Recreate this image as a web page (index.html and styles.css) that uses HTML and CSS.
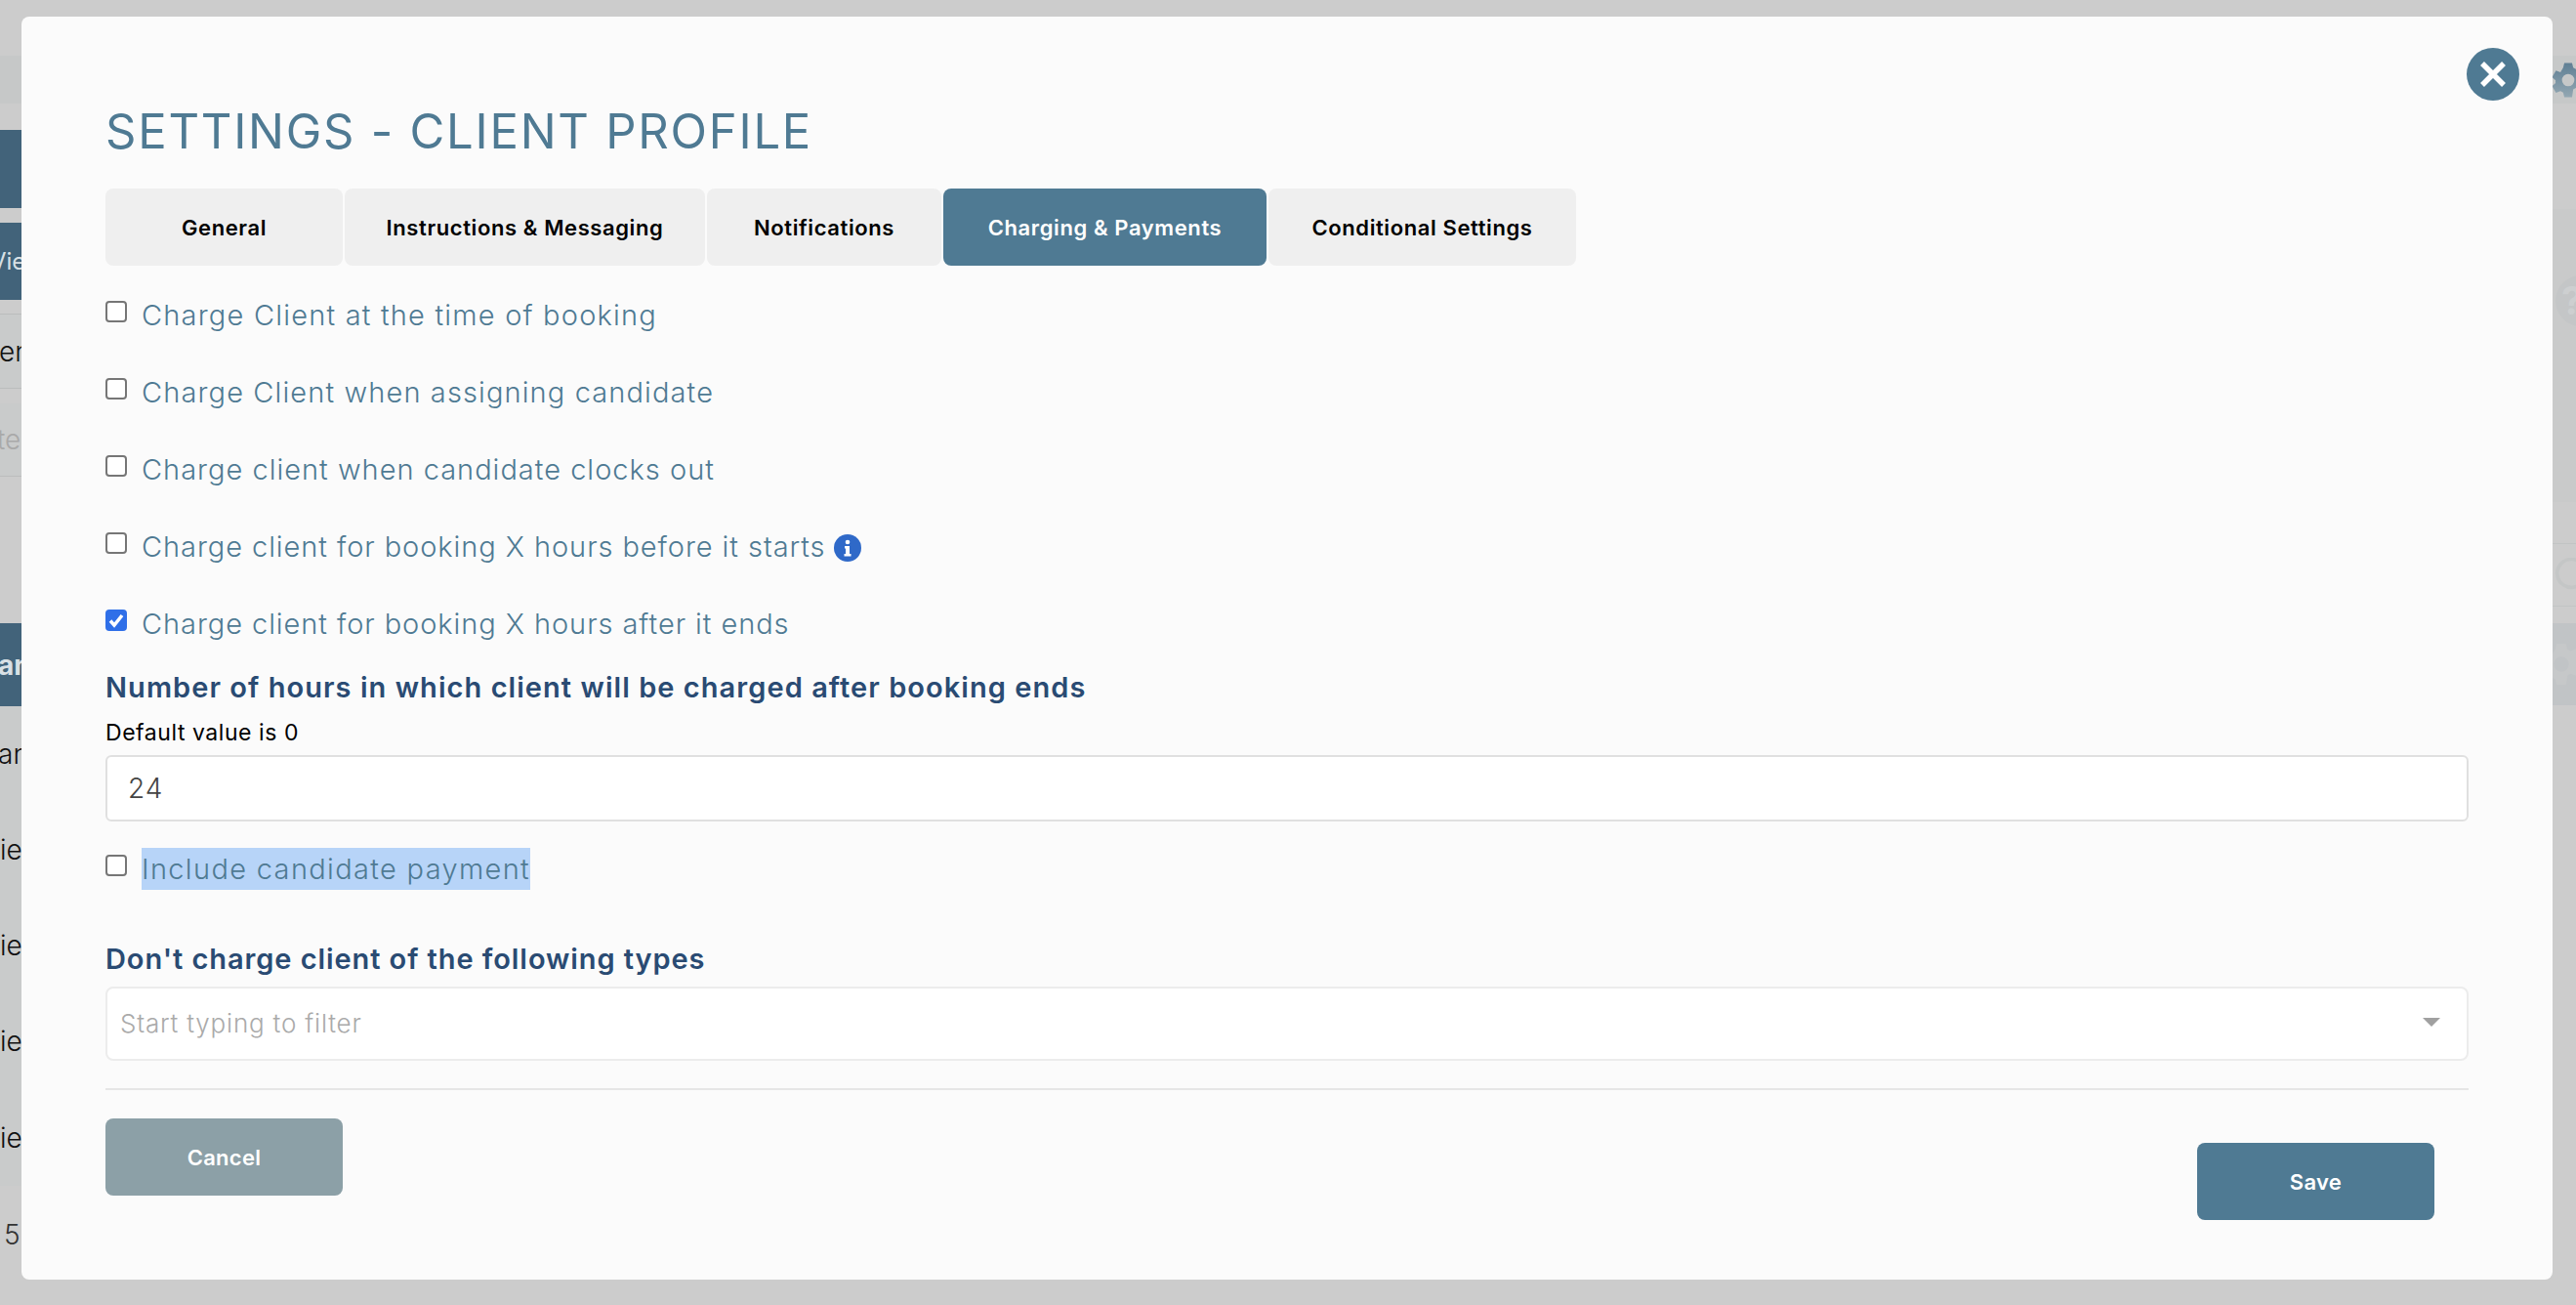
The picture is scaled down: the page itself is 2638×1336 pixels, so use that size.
FILE: index.html
```html
<!DOCTYPE html>
<html lang="en">
<head>
<meta charset="utf-8">
<title>Settings - Client Profile</title>
<link rel="stylesheet" href="styles.css">
</head>
<body>
<div class="page">
  <div class="under-left">
    <div class="u-band"></div>
    <div class="u-bar u-bar-a"></div>
    <div class="u-bar u-bar-b"><span class="u-vie">Vie</span></div>
    <div class="u-row u-row-en"><span>en</span></div>
    <div class="u-row u-row-te"><span>te</span></div>
    <div class="u-bar u-bar-c"><span>an</span></div>
    <div class="u-row u-row-list"><span>an</span></div>
    <div class="u-row u-row-list"><span class="u-ie">ie</span></div>
    <div class="u-row u-row-list"><span class="u-ie">ie</span></div>
    <div class="u-row u-row-list"><span class="u-ie">ie</span></div>
    <div class="u-row u-row-list u-last"><span class="u-ie">ie</span></div>
    <div class="u-five">5</div>
  </div>
  <div class="under-right">
    <div class="r-band">
      <svg class="r-gear" viewBox="0 0 48 48">
        <defs><linearGradient id="gearfill" x1="0" y1="0" x2="0" y2="1"><stop offset="0" stop-color="#5f7f94"/><stop offset="1" stop-color="#93a7b2"/></linearGradient></defs>
        <path fill="url(#gearfill)" fill-rule="evenodd" d="M19 2h10l1.500 6 3.500 1.800 5.800-2.200 5 8.600-4.500 4a14 14 0 0 1 0 3.600l4.500 4-5 8.600-5.800-2.200-3.500 1.800L29 46H19l-1.500-6-3.500-1.800-5.800 2.200-5-8.600 4.500-4a14 14 0 0 1 0-3.600l-4.500-4 5-8.600 5.800 2.200L17.500 8zM24 16a8 8 0 1 0 0 16 8 8 0 0 0 0-16z"/>
      </svg>
    </div>
    <div class="r-panel"><div class="r-q">?</div></div>
    <div class="r-row">
      <svg class="r-arc" viewBox="0 0 40 40"><path d="M34 8A16 16 0 1 0 36 24" fill="none" stroke="#c4c6c6" stroke-width="4"/></svg>
    </div>
    <div class="r-band-b">
      <svg class="r-gear-faint" viewBox="0 0 48 48"><path fill="#c6c8c9" fill-rule="evenodd" d="M19 2h10l1.500 6 3.500 1.800 5.800-2.200 5 8.600-4.500 4a14 14 0 0 1 0 3.600l4.500 4-5 8.600-5.800-2.200-3.500 1.800L29 46H19l-1.500-6-3.500-1.800-5.800 2.200-5-8.600 4.500-4a14 14 0 0 1 0-3.600l-4.500-4 5-8.600 5.800 2.200L17.500 8zM24 16a8 8 0 1 0 0 16 8 8 0 0 0 0-16z"/></svg>
    </div>
  </div>

  <div class="modal">
    <button class="close" type="button" aria-label="Close">
      <svg viewBox="0 0 54 54" width="54" height="54"><path d="M16 16l22 22M38 16L16 38" stroke="#fff" stroke-width="5.500" fill="none"/></svg>
    </button>
    <h1 class="title">SETTINGS - CLIENT PROFILE</h1>
    <div class="tabs">
      <div class="tab tab-general">General</div>
      <div class="tab tab-instr">Instructions &amp; Messaging</div>
      <div class="tab tab-notif">Notifications</div>
      <div class="tab tab-charge active">Charging &amp; Payments</div>
      <div class="tab tab-cond">Conditional Settings</div>
    </div>
    <div class="checks">
      <label class="check"><span class="box"></span><span class="check-text wide">Charge Client at the time of booking</span></label>
      <label class="check"><span class="box"></span><span class="check-text wide-b">Charge Client when assigning candidate</span></label>
      <label class="check"><span class="box"></span><span class="check-text">Charge client when candidate clocks out</span></label>
      <label class="check"><span class="box"></span><span class="check-text narrow">Charge client for booking X hours before it starts</span>
        <svg class="info" viewBox="0 0 28 28" width="28" height="28"><circle cx="14" cy="14" r="14" fill="#2f69c8"/><circle cx="14" cy="8" r="2.300" fill="#fff"/><path d="M11 12h5v8h1.500v2.500h-7V20H12v-5.500h-1z" fill="#fff"/></svg>
      </label>
      <label class="check"><span class="box box-on"><svg viewBox="0 0 22 22" width="22" height="22"><path d="M5 11.500l4 4.500 8-10" stroke="#fff" stroke-width="3.500" fill="none"/></svg></span><span class="check-text narrow">Charge client for booking X hours after it ends</span></label>
    </div>
    <h2 class="section section-hours">Number of hours in which client will be charged after booking ends</h2>
    <div class="hint">Default value is 0</div>
    <div class="input">24</div>
    <label class="check check-include"><span class="box"></span><span class="check-text selected">Include candidate payment</span></label>
    <h2 class="section section-types">Don't charge client of the following types</h2>
    <div class="select"><span class="placeholder">Start typing to filter</span><span class="caret"></span></div>
    <hr class="rule">
    <div class="actions">
      <button class="btn btn-cancel" type="button">Cancel</button>
      <button class="btn btn-save" type="button">Save</button>
    </div>
  </div>
</div>
</body>
</html>
```
FILE: styles.css
```css
* { box-sizing: border-box; }
html, body { margin: 0; padding: 0; }
body { font-family: "Inter", "Liberation Sans", sans-serif; background: #cccccc; }
.page { position: relative; width: 2638px; height: 1336px; overflow: hidden; background: #cccccc; display: flex; justify-content: space-between; }

/* page under the overlay */
.under-left { width: 22px; display: flex; flex-direction: column; overflow: hidden; font-size: 28px; color: #111; white-space: nowrap; }
.u-band { height: 49px; margin: 57px 0 27px; background: #c6c8c8; flex: none; }
.u-bar { flex: none; background: #42637a; color: #d8e0e5; display: flex; align-items: center; }
.u-bar-a { height: 80px; }
.u-bar-b { height: 79px; margin-top: 15px; font-size: 24px; }
.u-vie { margin-left: -10px; }
.u-bar-c { height: 85px; margin-top: 150px; font-weight: 700; font-size: 28px; }
.u-bar-c span { margin-left: -2px; }
.u-row { flex: none; display: flex; align-items: center; background: #c9cbcb; font-weight: 300; }
.u-row-en { height: 77px; margin-top: 14px; border-top: 1px solid #bbbdbd; border-bottom: 1px solid #bbbdbd; }
.u-row-en span { margin-left: -1px; }
.u-row-te { height: 75px; margin-top: 15px; border-bottom: 1px solid #bbbdbd; color: #a9a9a9; }
.u-row-te span { margin-left: -3px; }
.u-row-list { height: 99px; margin-bottom: -1px; border-bottom: 1px solid #bbbdbd; }
.u-last { border-bottom: 0; margin: 0; }
.u-row-list span { margin-left: -2px; }
.u-row-list .u-ie { margin-left: 0; }
.u-five { margin: 33px 0 0 4px; font-size: 28px; line-height: 34px; color: #333; font-weight: 300; }

.under-right { width: 24px; display: flex; flex-direction: column; overflow: hidden; }
.r-band { height: 49px; margin-top: 57px; background: #c6c8c8; flex: none; display: flex; align-items: center; }
.r-gear { width: 38px; height: 38px; flex: none; margin-left: -3px; }
.r-panel { height: 300px; margin-top: 108px; background: #c9caca; flex: none; }
.r-q { margin: 68px 0 0 3px; width: 52px; height: 52px; border-radius: 50%; background: #c4c6c7; color: #cdcfd0; font-size: 40px; font-weight: 700; line-height: 52px; text-indent: 6px; }
.r-row { height: 65px; margin-top: 42px; flex: none; border-top: 1px solid #c2c4c4; border-bottom: 1px solid #c2c4c4; display: flex; align-items: center; }
.r-arc { width: 36px; height: 36px; flex: none; }
.r-band-b { height: 84px; margin-top: 17px; flex: none; background: #c1c4c6; display: flex; align-items: center; }
.r-gear-faint { width: 46px; height: 46px; flex: none; margin-left: -14px; }

/* modal */
.modal { position: absolute; left: 22px; top: 17px; width: 2592px; height: 1293px; background: #fbfbfb; border-radius: 8px; padding: 87px 86px 0 86px; }
.close { position: absolute; right: 34px; top: 32px; width: 54px; height: 54px; border: 0; padding: 0; border-radius: 50%; background: #4f7a93; display: block; }
.close svg { display: block; }
.title { margin: 0; font-size: 49px; line-height: 62px; font-weight: 400; color: #4f7a93; letter-spacing: 1.75px; }
.tabs { display: flex; gap: 2px; margin-top: 27px; height: 79px; }
.tab { background: #efefef; border-radius: 8px; display: flex; align-items: center; justify-content: center; color: #000; font-size: 22px; font-weight: 600; letter-spacing: 0.6px; }
.tab-general { width: 243px; }
.tab-instr { width: 369px; }
.tab-notif { width: 240px; }
.tab-charge { width: 331px; }
.tab-cond { width: 315px; }
.tab.active { background: #4f7a93; color: #fff; }
.checks { display: flex; flex-direction: column; gap: 34px; margin-top: 29px; }
.check { display: flex; align-items: center; height: 45px; color: #4f7a93; font-size: 29px; font-weight: 300; letter-spacing: 1px; }
.box { flex: none; width: 22px; height: 22px; margin: -10px 15px 0 0; background: #fff; border: 2px solid #767676; border-radius: 4px; display: block; }
.box-on { background: #2f6fe8; border: 0; }
.box-on svg { display: block; }
.check-text { line-height: 43px; margin-bottom: 2px; }
.wide { letter-spacing: 1.2px; }
.wide-b { letter-spacing: 1.12px; }
.narrow { letter-spacing: 0.93px; }
.info { margin-left: 8px; flex: none; }
.section { margin: 0; font-size: 29px; font-weight: 600; color: #2a4b73; line-height: 40px; letter-spacing: 1.05px; }
.section-hours { margin-top: 22px; }
.hint { margin-top: 11px; font-size: 23px; line-height: 30px; color: #000; letter-spacing: 0.55px; }
.input { margin: 8px 0 0 0; height: 68px; background: #fff; border: 2px solid #e0e0e0; border-radius: 6px; padding-left: 21px; display: flex; align-items: center; font-size: 28px; font-weight: 300; color: #444; letter-spacing: 1px; }
.check-include { margin-top: 27px; }
.selected { background: #b7d4f8; letter-spacing: 1.33px; }
.section-types { margin-top: 49px; letter-spacing: 0.92px; }
.select { margin-top: 8px; height: 76px; background: #fff; border: 2px solid #ececec; border-radius: 8px; padding: 0 27px 0 13px; display: flex; align-items: center; justify-content: space-between; }
.placeholder { font-size: 26px; font-weight: 300; color: #aaaaaa; letter-spacing: 0.8px; margin-top: -2px; }
.caret { width: 0; height: 0; border-left: 9px solid transparent; border-right: 9px solid transparent; border-top: 9px solid #a0a0a0; margin-top: -4px; }
.rule { border: 0; border-top: 2px solid #e6e6e6; margin: 28px 0 0; }
.actions { display: flex; justify-content: space-between; padding-right: 35px; }
.btn { width: 243px; height: 79px; border: 0; border-radius: 8px; color: #fff; font-family: inherit; font-size: 22px; font-weight: 600; letter-spacing: 0.3px; }
.btn-cancel { background: #8ca0a7; margin-top: 29px; }
.btn-save { background: #4f7a93; margin-top: 54px; }
```
